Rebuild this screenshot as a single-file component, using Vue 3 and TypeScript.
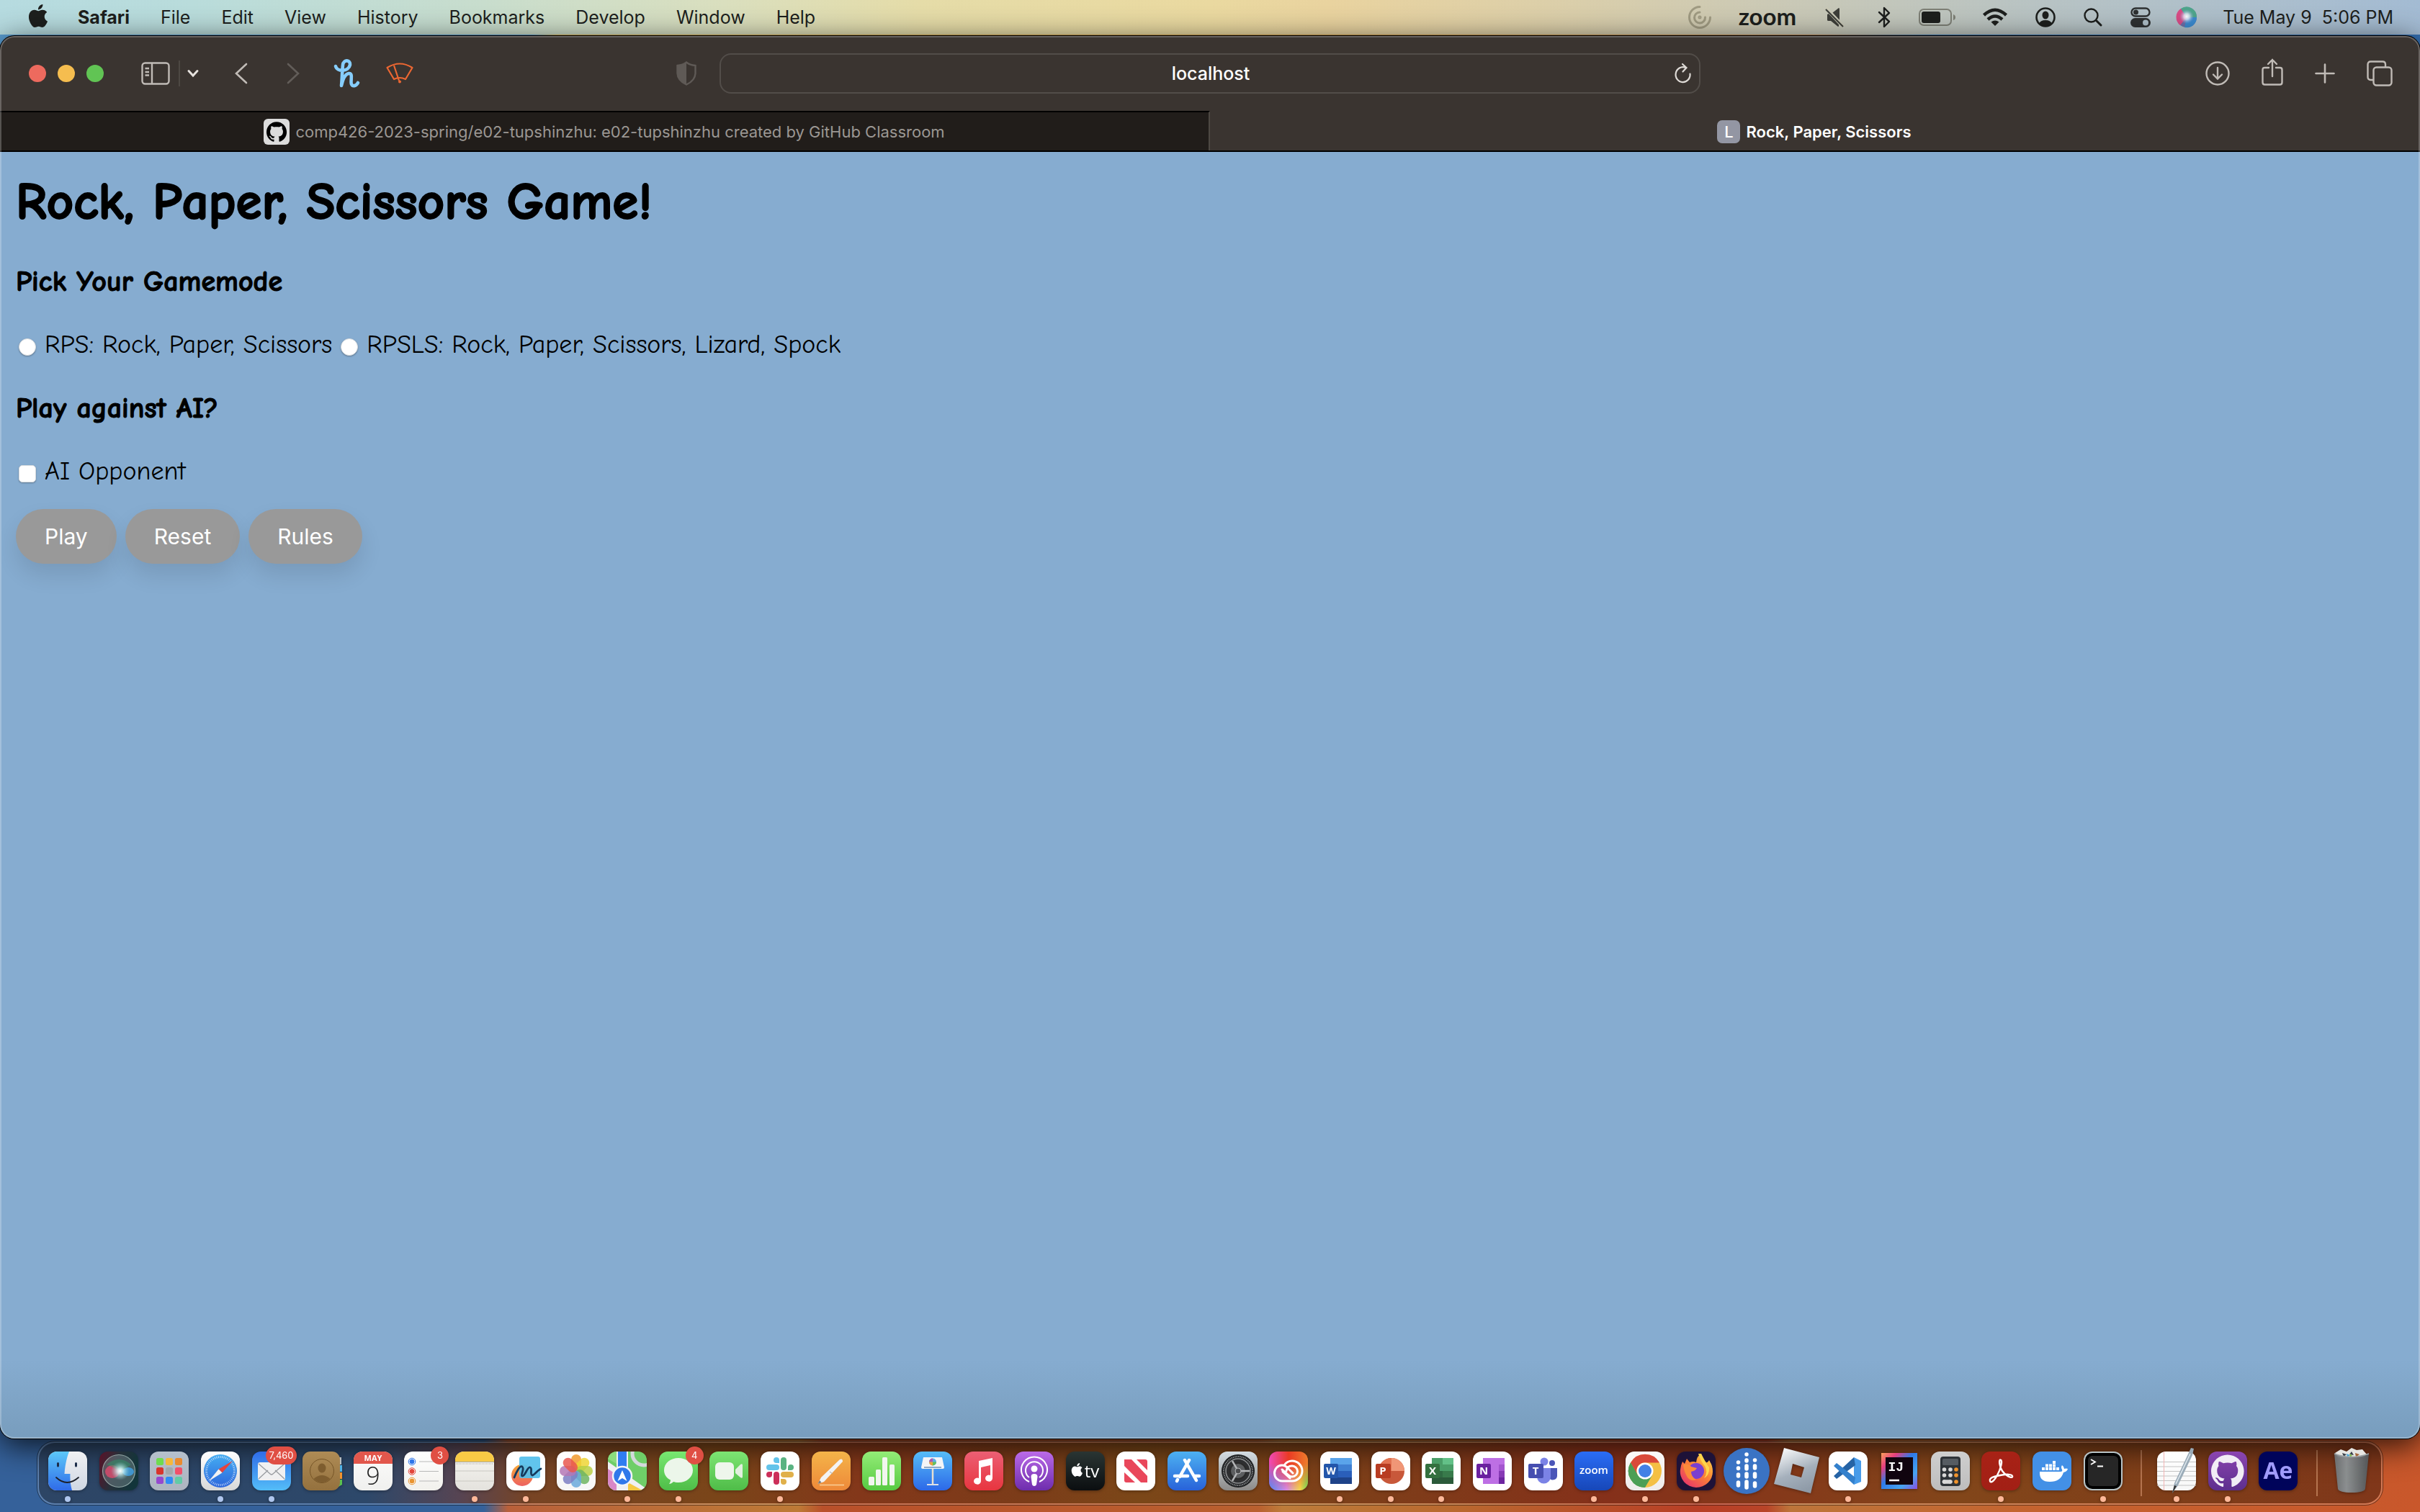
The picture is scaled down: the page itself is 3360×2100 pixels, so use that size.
<script setup lang="ts">
import { ref } from 'vue'

interface DockApp {
  name: string
  art: string
  running?: boolean
  badge?: string
}

const APPLE =
  'M12.152 6.896c-.948 0-2.415-1.078-3.96-1.04-2.04.027-3.91 1.183-4.961 3.014-2.117 3.675-.546 9.103 1.519 12.09 1.013 1.454 2.208 3.09 3.792 3.039 1.52-.065 2.09-.987 3.935-.987 1.831 0 2.35.987 3.96.948 1.637-.026 2.676-1.48 3.676-2.948 1.156-1.688 1.636-3.325 1.662-3.415-.039-.013-3.182-1.221-3.22-4.857-.026-3.04 2.48-4.494 2.597-4.559-1.429-2.09-3.623-2.324-4.39-2.376-2-.156-3.675 1.09-4.61 1.09zM15.53 3.83c.843-1.012 1.4-2.427 1.245-3.83-1.207.052-2.662.805-3.532 1.818-.78.896-1.454 2.338-1.273 3.714 1.338.104 2.715-.688 3.559-1.701'
const OCTOCAT =
  'M12 .297c-6.63 0-12 5.373-12 12 0 5.303 3.438 9.8 8.205 11.385.6.113.82-.258.82-.577 0-.285-.01-1.04-.015-2.04-3.338.724-4.042-1.61-4.042-1.61C4.422 18.07 3.633 17.7 3.633 17.7c-1.087-.744.084-.729.084-.729 1.205.084 1.838 1.236 1.838 1.236 1.07 1.835 2.809 1.305 3.495.998.108-.776.417-1.305.76-1.605-2.665-.3-5.466-1.332-5.466-5.93 0-1.31.465-2.38 1.235-3.22-.135-.303-.54-1.523.105-3.176 0 0 1.005-.322 3.3 1.23.96-.267 1.98-.399 3-.405 1.02.006 2.04.138 3 .405 2.28-1.552 3.285-1.23 3.285-1.23.645 1.653.24 2.873.12 3.176.765.84 1.23 1.91 1.23 3.22 0 4.61-2.805 5.625-5.475 5.92.42.36.81 1.096.81 2.22 0 1.606-.015 2.896-.015 3.286 0 .315.21.69.825.57C20.565 22.092 24 17.592 24 12.297c0-6.627-5.373-12-12-12'

/** Rounded app tile filled with a vertical gradient; the id also names a clip for its contents. */
function tile(id: string, top: string, bottom: string = top): string {
  return (
    `<defs><linearGradient id="${id}" x2="0" y2="1"><stop stop-color="${top}"/><stop offset="1" stop-color="${bottom}"/></linearGradient>` +
    `<clipPath id="${id}-clip"><rect width="54" height="54" rx="12"/></clipPath></defs>` +
    `<rect width="54" height="54" rx="12" fill="url(#${id})"/>`
  )
}

function glyph(text: string, x: number, y: number, size: number, fill = '#fff', weight = 700): string {
  return `<text x="${x}" y="${y}" font-size="${size}" font-weight="${weight}" fill="${fill}" text-anchor="middle" font-family="Open Sans, sans-serif">${text}</text>`
}

const around = (count: number, draw: (angle: number, i: number) => string): string =>
  Array.from({ length: count }, (_, i) => draw((360 / count) * i, i)).join('')

const launchpadColors = ['#6fdc4f', '#f5b83c', '#ea8a2f', '#d8352c', '#a3a8ab', '#f0506a', '#9548cf', '#2f8cf5', '#62cba6']
const petals = ['#f29a2e', '#efd535', '#b9cf45', '#6fb562', '#6aa9dc', '#7d7fc4', '#b477b5', '#e9574f']

const dockApps: DockApp[] = [
  {
    name: 'Finder',
    running: true,
    art:
      tile('finder', '#f1f1f3', '#cfd7e3') +
      `<defs><linearGradient id="finder-l" x2="0" y2="1"><stop stop-color="#5cc8f9"/><stop offset="1" stop-color="#2f6be9"/></linearGradient></defs>
      <path clip-path="url(#finder-clip)" fill="url(#finder-l)" d="M0 0H29C25 10 23 22 22.500 31H30.500C30 39 31 47 33 54H0Z"/>
      <path stroke="#1c2c48" stroke-width="3" stroke-linecap="round" fill="none" d="M13.500 16.500V20M38.500 16.500V20"/><path d="M11 36Q26 50 42 36" stroke="#1c1f28" stroke-width="1.800" fill="none" stroke-linecap="round"/>`,
  },
  {
    name: 'Siri',
    art:
      `<defs><linearGradient id="siri" x2="1" y2=".3"><stop stop-color="#5b1228"/><stop offset=".5" stop-color="#26303a"/><stop offset="1" stop-color="#12353a"/></linearGradient>
      <radialGradient id="siri-glow"><stop stop-color="#fff"/><stop offset=".3" stop-color="#dff" stop-opacity=".8"/><stop offset="1" stop-color="#8cc" stop-opacity="0"/></radialGradient></defs>
      <rect width="54" height="54" rx="12" fill="url(#siri)"/><circle cx="27" cy="27" r="22.500" fill="#7a8f92" fill-opacity=".45" stroke="#b7cfc9" stroke-opacity=".7" stroke-width="1.200"/>
      <ellipse cx="18" cy="28" rx="10" ry="9" fill="#e8486e" fill-opacity=".75"/><ellipse cx="40" cy="28" rx="8" ry="6" fill="#3f9fe0" fill-opacity=".85"/>
      <path d="M10 18Q27 4 44 18Q34 26 28 27Q20 22 10 18Z" fill="#2c9c68" fill-opacity=".45"/><circle cx="29" cy="27" r="13" fill="url(#siri-glow)"/>`,
  },
  {
    name: 'Launchpad',
    art:
      tile('launchpad', '#b5c0cc', '#adb4c0') +
      launchpadColors
        .map((c, i) => `<rect x="${9 + (i % 3) * 13}" y="${9 + Math.floor(i / 3) * 13}" width="10" height="10" rx="2.500" fill="${c}"/>`)
        .join(''),
  },
  {
    name: 'Safari',
    running: true,
    art:
      tile('safari', '#ffffff', '#d8d8d8') +
      `<defs><linearGradient id="safari-d" x2="0" y2="1"><stop stop-color="#45adf2"/><stop offset="1" stop-color="#2c66dc"/></linearGradient></defs><circle cx="27" cy="27" r="23" fill="url(#safari-d)"/>` +
      around(48, (a) => `<path d="M27 6V9" stroke="#fff" stroke-opacity=".8" stroke-width=".8" transform="rotate(${a} 27 27)"/>`) +
      `<path d="M44 13L24.500 24.500L29.500 29.500Z" fill="#e8433c"/><path d="M11 41L24.500 24.500L29.500 29.500Z" fill="#f2f2f2"/>`,
  },
  {
    name: 'Mail',
    running: true,
    badge: '7,460',
    art:
      tile('mail', '#2f6ce8', '#54bdf8') +
      `<rect x="8" y="15" width="38" height="25" rx="3" fill="#f0f0f1"/><path d="M9 38L22 26M45 38L32 26M9 17L25 31Q27 33 29 31L45 17" fill="none" stroke="#999ca1" stroke-width="1.300"/>`,
  },
  {
    name: 'Contacts',
    art:
      `<path d="M48 8H54V18H48Z" fill="#b9bfc2"/><path d="M48 19H55V28H48Z" fill="#4fb1e6"/><path d="M48 29H55V38H48Z" fill="#f0932f"/><path d="M48 39H55V46L48 50Z" fill="#59c24e"/>
      <defs><linearGradient id="contacts" x2="0" y2="1"><stop stop-color="#ae8b55"/><stop offset="1" stop-color="#94713e"/></linearGradient></defs><rect width="52" height="54" rx="11" fill="url(#contacts)"/>
      <circle cx="27" cy="27" r="16.500" fill="none" stroke="#765628" stroke-width="1"/><ellipse cx="27" cy="23" rx="5.500" ry="6.500" fill="#7e5d2f"/><path d="M15.500 38Q27 28 38.500 38Q27 48 15.500 38Z" fill="#7e5d2f"/>`,
  },
  {
    name: 'Calendar',
    art:
      tile('calendar', '#fcfcfc', '#f0f0ee') +
      `<path clip-path="url(#calendar-clip)" d="M0 0H54V17H0Z" fill="#e2574c"/>` +
      glyph('MAY', 27, 13, 11) +
      glyph('9', 27, 46, 34, '#222', 300),
  },
  {
    name: 'Reminders',
    badge: '3',
    art:
      tile('reminders', '#ffffff', '#f1f0ec') +
      ['#2f76ea', '#e2463b', '#e99430']
        .map((c, i) => `<circle cx="11" cy="${14 + i * 13.5}" r="4" fill="${c}" stroke="#fff" stroke-width="1"/><circle cx="11" cy="${14 + i * 13.5}" r="4.800" fill="none" stroke="${c}" stroke-width="1"/><path d="M21 ${14 + i * 13.5}H48" stroke="#b8b8b8"/>`)
        .join(''),
  },
  {
    name: 'Notes',
    running: true,
    art:
      tile('notes', '#f7f6f2', '#e4e2dd') +
      `<path clip-path="url(#notes-clip)" d="M0 0H54V14H0Z" fill="#f9ca45"/><path d="M0 14.500H54" stroke="#aaa7a0"/><path d="M1 17H53" stroke="#aaa7a0" stroke-dasharray="1 1"/><path d="M0 27H54M0 41H54" stroke="#cac8c2"/>`,
  },
  {
    name: 'Freeform',
    running: true,
    art:
      tile('freeform', '#ffffff') +
      `<defs><linearGradient id="freeform-o" x2="0" y2="1"><stop stop-color="#f6a734"/><stop offset="1" stop-color="#ed6161"/></linearGradient></defs>
      <circle cx="22" cy="33" r="15" fill="url(#freeform-o)"/><rect x="18" y="7" width="29" height="30" rx="3" fill="#55bfec" fill-opacity=".93"/>
      <path d="M11 36C14 28 19 19 22 21C26 24 19 33 22 34C26 35 29 21 33 22C37 23 32 32 36 33C39 33 43 26 48 24" stroke="#163a5c" stroke-width="2.800" fill="none" stroke-linecap="round"/>`,
  },
  {
    name: 'Photos',
    art:
      tile('photos', '#ffffff', '#f6f6f6') +
      around(8, (a, i) => `<rect x="20" y="4" width="14" height="23" rx="7" fill="${petals[i]}" fill-opacity=".85" transform="rotate(${a} 27 27)"/>`),
  },
  {
    name: 'Maps',
    running: true,
    art:
      tile('maps', '#6fce68') +
      `<g clip-path="url(#maps-clip)"><path d="M0 14L54 52V60H0Z" fill="#f0f0f2"/><path d="M28 43L48 54H28Z" fill="#f6c944"/><path d="M0 0H12V54H28V0" fill="#eef0f3"/><path d="M0 0H12V17L0 10Z" fill="#8bdc7e"/><path d="M14 0H26V28H14Z" fill="#2f7df1"/><path d="M0 24L12 32V54H0Z" fill="#d987c7"/><circle cx="50" cy="3" r="16" fill="none" stroke="#d4d8dc" stroke-width="5"/></g>
      <circle cx="20" cy="34" r="13" fill="#2f78ea" stroke="#f2f4f7" stroke-width="2.500"/><path d="M20 26L26.500 41L20 37L13.500 41Z" fill="#fff"/>`,
  },
  {
    name: 'Messages',
    running: true,
    badge: '4',
    art:
      tile('messages', '#78e771', '#4fbd48') +
      `<path d="M27 9C38.500 9 47 16.500 47 26S38.500 43 27 43C24 43 21.500 42.500 20 42C18 44 16 45 14 45C15.500 43 16 41 16 39.500C10.500 37 7 32 7 26C7 16.500 15.500 9 27 9Z" fill="#ecf6ea"/>`,
  },
  {
    name: 'FaceTime',
    art: tile('facetime', '#7de573', '#4fbc48') + `<rect x="8" y="15" width="26" height="24" rx="6" fill="#eef6ec"/><path d="M36 25L43 18Q46 16 46 19V35Q46 38 43 36L36 30Z" fill="#e2f0df"/>`,
  },
  {
    name: 'Slack',
    running: true,
    art:
      tile('slack', '#ffffff') +
      `<g stroke-width="8" stroke-linecap="round"><g stroke="#63c3ea" fill="#63c3ea"><path d="M12 22H22"/><path stroke="none" d="M26 16H22A4 4 0 1 1 26 12Z"/></g><g stroke="#5ab382" fill="#5ab382"><path d="M32 12V22"/><path stroke="none" d="M38 26V22A4 4 0 1 1 42 26Z"/></g><g stroke="#e0b04a" fill="#e0b04a"><path d="M32 32H42"/><path stroke="none" d="M28 38H32A4 4 0 1 1 28 42Z"/></g><g stroke="#cc2f59" fill="#cc2f59"><path d="M22 32V42"/><path stroke="none" d="M16 28V32A4 4 0 1 1 12 28Z"/></g></g>`,
  },
  {
    name: 'Pages',
    art: tile('pages', '#f4b449', '#ee8939') + `<path d="M11 46.500H45" stroke="#f9cf97" stroke-width="1.500"/><path d="M8.500 45L13 36L39 11Q43 9 43 14L17 42Z" fill="#f3f3f3"/><path d="M25 28L29 31" stroke="#a5a5a5"/><path d="M8.500 45L11 40L13.500 43Z" fill="#777"/>`,
  },
  {
    name: 'Numbers',
    art: tile('numbers', '#93ec77', '#57ca42') + `<g fill="#f2f6f0"><rect x="9" y="35" width="8" height="12" rx="1.500"/><rect x="19" y="25" width="7" height="22" rx="1.500"/><rect x="28" y="8" width="7" height="39" rx="1.500"/><rect x="38" y="18" width="7" height="29" rx="1.500"/></g>`,
  },
  {
    name: 'Keynote',
    art:
      tile('keynote', '#56bdf8', '#2c68e8') +
      `<path d="M14 8H40L43 22Q43 24 41 24H13Q11 24 11 22Z" fill="#f4f5f7"/><path d="M15 22H39" stroke="#6e8fb5" stroke-width="1.500"/><circle cx="27" cy="14.500" r="5" fill="#5aaee8"/><path d="M27 14.500V9.500A5 5 0 0 0 22 14.500Z" fill="#b05ab0"/><path d="M27 14.500V19.500A5 5 0 0 1 22 14.500Z" fill="#f0a23c"/><path d="M27 14.500H32A5 5 0 0 1 27 19.500Z" fill="#67bf5b"/><path d="M27 24V45" stroke="#e6dfd2" stroke-width="2.500"/><path d="M19 46H35" stroke="#dadfe8" stroke-width="2"/>`,
  },
  {
    name: 'Music',
    art: tile('music', '#ec5f74', '#e8353f') + `<path d="M20 13L39 9V37A5 4.500 0 1 1 36 33V19L23 22V41A5 4.500 0 1 1 20 37Z" fill="#fff"/>`,
  },
  {
    name: 'Podcasts',
    art:
      tile('podcasts', '#bb6ae8', '#6e2dad') +
      `<g fill="none" stroke="#fff" stroke-width="2"><path d="M20 42A18 18 0 1 1 34 42"/><path d="M20 36A12 12 0 1 1 34 36"/></g><circle cx="27" cy="24" r="4.500" fill="#fff"/><path d="M22.500 35Q22.500 31 27 31T31.500 35L30 46Q29 48 27 48T24 46Z" fill="#fff"/>`,
  },
  {
    name: 'TV',
    art: tile('tv', '#2a3533', '#0b0e10') + `<path transform="translate(6 16) scale(.78)" d="${APPLE}" fill="#fff"/>` + glyph('tv', 36, 36, 24, '#fff', 500),
  },
  {
    name: 'News',
    art: tile('news', '#ffffff') + `<path d="M11 11H21L43 34V43H34L11 20Z" fill="#e9475b"/><path d="M28 11H40Q43 11 43 14V26Z" fill="#e9475b"/><path d="M11 29V40Q11 43 14 43H26Z" fill="#e9475b"/>`,
  },
  {
    name: 'App Store',
    art: tile('appstore', '#4db1f2', '#2862d9') + `<g stroke="#fff" stroke-width="4.500" stroke-linecap="round"><path d="M30 12L17 35M24 12L40 40M10 34H28M37 34H44M14 39L13 41"/></g>`,
  },
  {
    name: 'System Settings',
    art:
      tile('settings', '#d4dde3', '#8c8b89') +
      `<circle cx="27" cy="27" r="23" fill="#1e2022"/><circle cx="27" cy="27" r="20" fill="none" stroke="#87898b" stroke-width="2" stroke-dasharray="1.400 1"/><circle cx="27" cy="27" r="17" fill="#2e2f31" stroke="#8c8e90" stroke-width="1.600"/><circle cx="27" cy="27" r="11" fill="#5c5e60" stroke="#2a2a2a" stroke-width="2"/>` +
      around(3, (a) => `<path d="M27 27H43" stroke="#b4b6b8" stroke-width="2.500" transform="rotate(${a} 27 27)"/>`) +
      `<circle cx="27" cy="27" r="4" fill="#4b4c4e" stroke="#b4b6b8"/>`,
  },
  {
    name: 'Creative Cloud',
    art:
      `<defs><linearGradient id="cc" x2="1" y2="0"><stop stop-color="#f04ab8"/><stop offset=".5" stop-color="#ea3a24"/><stop offset="1" stop-color="#ee7d2c"/></linearGradient>
      <linearGradient id="cc-low" x2="1" y2="0"><stop stop-color="#4a8df5"/><stop offset=".45" stop-color="#d68be8"/><stop offset=".8" stop-color="#f4d94a"/><stop offset="1" stop-color="#5be05c"/></linearGradient>
      <linearGradient id="cc-fade" x2="0" y2="1"><stop stop-color="#000"/><stop offset=".3" stop-color="#000"/><stop offset="1" stop-color="#fff"/></linearGradient><mask id="cc-mask"><rect width="54" height="54" fill="url(#cc-fade)"/></mask></defs>
      <rect width="54" height="54" rx="12" fill="url(#cc)"/><rect width="54" height="54" rx="12" fill="url(#cc-low)" mask="url(#cc-mask)"/>
      <path d="M18 41A10.500 11 0 0 1 18 19Q22 19 25 22L33 30M21 19Q25 13 32 13A14 14 0 0 1 32 41H18M29 37L19 28M24 27Q25 20 32 20A7.500 7.500 0 0 1 32 35Q29 35 26 32L18 25" fill="none" stroke="#fff" stroke-width="3" stroke-linecap="round"/>`,
  },
  {
    name: 'Word',
    running: true,
    art: tile('word', '#ffffff') + `<path d="M14 9H44V18H14Z" fill="#5aa4ea"/><path d="M14 18H44V27H14Z" fill="#3f80d2"/><path d="M14 27H44V36H14Z" fill="#2a5fba"/><path d="M14 36H44V45H14Z" fill="#1e4389"/><rect x="5" y="17" width="20" height="20" rx="2" fill="#2356aa"/>` + glyph('W', 15, 32, 14),
  },
  {
    name: 'PowerPoint',
    running: true,
    art: tile('powerpoint', '#ffffff') + `<circle cx="28" cy="27" r="18" fill="#c8583a"/><path d="M28 9A18 18 0 0 1 46 27H28Z" fill="#f09676"/><path d="M28 9A18 18 0 0 0 10 27H28Z" fill="#e27352"/><rect x="6" y="17" width="21" height="20" rx="2" fill="#b83c22"/>` + glyph('P', 16, 32, 15),
  },
  {
    name: 'Excel',
    running: true,
    art: tile('excel', '#ffffff') + `<path d="M14 9H29V27H14Z" fill="#4a9e68"/><path d="M29 9H44V18H29Z" fill="#63c188"/><path d="M29 18H44V27H29Z" fill="#4a9e68"/><path d="M14 27H29V36H14Z" fill="#2f6a42"/><path d="M29 27H44V36H29Z" fill="#387a4b"/><path d="M14 36H44V45H14Z" fill="#2b5a3a"/><rect x="5" y="17" width="20" height="20" rx="2" fill="#33703f"/>` + glyph('X', 15, 32, 15),
  },
  {
    name: 'OneNote',
    art: tile('onenote', '#ffffff') + `<path d="M14 9H44V45H14Z" fill="#bd6fe4"/><path d="M36 18H44V27H36Z" fill="#a455cf"/><path d="M36 27H44V36H36Z" fill="#873ab5"/><path d="M36 36H44V45H36Z" fill="#6d25a0"/><rect x="5" y="17" width="20" height="20" rx="2" fill="#6a209f"/>` + glyph('N', 15, 32, 15),
  },
  {
    name: 'Teams',
    art: tile('teams', '#ffffff') + `<circle cx="39" cy="16" r="4" fill="#4b56b8"/><path d="M35 23H46V34A6 6 0 0 1 36 38Z" fill="#4b56b8"/><circle cx="28" cy="14" r="5.500" fill="#7b83e6"/><path d="M18 23H37V35A9.500 9.500 0 0 1 18 35Z" fill="#7b83e6"/><rect x="6" y="17" width="21" height="20" rx="2" fill="#464eb0"/>` + glyph('T', 16, 32, 15),
  },
  { name: 'Zoom', running: true, art: tile('zoom', '#2a6df6', '#1747b8') + glyph('zoom', 27, 31, 15, '#fff', 600) },
  {
    name: 'Chrome',
    running: true,
    art:
      tile('chrome', '#fbfafa', '#efecea') +
      `<circle cx="27" cy="27" r="23" fill="#f4c044"/><path d="M27 27L17 33L7 15.500A23 23 0 0 0 27 50L37 33Z" fill="#4c9f55"/><path d="M7 15.500A23 23 0 0 1 47 15.500H27A11.500 11.500 0 0 0 17 33Z" fill="#d9493a"/><path d="M7 15.500L17 33L27 50A23 23 0 0 1 7 15.500Z" fill="#4c9f55"/><circle cx="27" cy="27" r="11.500" fill="#fff"/><circle cx="27" cy="27" r="9" fill="#4281e6"/>`,
  },
  {
    name: 'Firefox',
    running: true,
    art:
      tile('firefox', '#1e1238') +
      `<defs><linearGradient id="fox" x1="1" x2=".2" y2="1"><stop stop-color="#ffe24a"/><stop offset=".5" stop-color="#fb8334"/><stop offset="1" stop-color="#e8336c"/></linearGradient></defs>
      <path d="M27 50A23 22 0 0 1 5 25Q6 18 8 14L11 17L14 10L18 15Q23 13 27 15Q28 6 34 3Q35 11 41 15Q43 16 45 12Q50 19 50 28A23 22 0 0 1 27 50Z" fill="url(#fox)"/><circle cx="27" cy="27" r="11" fill="#7a3fd0"/><path d="M9 18Q17 16 20 21L28 23Q26 27 20 28Q20 35 27 39Q20 42 15 36Q10 28 9 18Z" fill="#fb8a3a"/><path d="M30 3Q34 15 39 20Q44 29 38 37Q46 32 45 22Q41 17 34 3Z" fill="#ffd54a"/>`,
  },
  {
    name: 'Panopto',
    art: `<circle cx="27" cy="27" r="32" fill="#3a73c4"/><g stroke="#fff" stroke-width="5.500" stroke-linecap="round"><path d="M27 4V4.100M27 12V13M27 20V24M27 31V35M27 42V50"/><path d="M15.500 15V15.100M15.500 23V23.500M15.500 32V34M15.500 43V47"/><path d="M38.500 12V12.100M38.500 20V23M38.500 31V35M38.500 44V48"/></g>`,
  },
  {
    name: 'Roblox',
    art: `<defs><linearGradient id="roblox" x1=".1" x2=".5" y2="1"><stop stop-color="#fff"/><stop offset=".6" stop-color="#a5b0bc"/><stop offset="1" stop-color="#8f9ba8"/></linearGradient></defs><path fill-rule="evenodd" fill="url(#roblox)" d="M8 -5L57 8L45 58L-6 45ZM20 17L17 32L32 36L36 22Z"/>`,
  },
  {
    name: 'Visual Studio Code',
    running: true,
    art: tile('vscode', '#ffffff') + `<path d="M35 8L45 13V42L35 46Z" fill="#479be9"/><path d="M35 8L7 34L11 38L37 19Z" fill="#2563a5"/><path d="M35 46L7 20L11 16L37 36Z" fill="#3380cc"/>`,
  },
  {
    name: 'IntelliJ IDEA',
    art: `<defs><linearGradient id="ij" x2="1" y2="1"><stop stop-color="#fba05a"/><stop offset=".22" stop-color="#e83f7f"/><stop offset=".45" stop-color="#2e7ae8"/><stop offset=".75" stop-color="#47a4f0"/><stop offset="1" stop-color="#8b4fe0"/></linearGradient></defs><rect x="2" y="2" width="50" height="50" fill="url(#ij)"/><rect x="8" y="8" width="38" height="38" fill="#10040f"/><text x="11.500" y="27" font-family="Liberation Mono, monospace" font-size="18" font-weight="700" fill="#fff">IJ</text><path d="M13 40H27" stroke="#fff" stroke-width="2.500"/>`,
  },
  {
    name: 'Calculator',
    art:
      tile('calculator', '#cfcfcf', '#bdbdbd') +
      `<rect x="13" y="7" width="28" height="41" rx="4" fill="#2e3338"/><rect x="16" y="10" width="22" height="9" rx="1.500" fill="#565c62"/>` +
      [25, 33, 42].map((y) => `<circle cx="18.500" cy="${y}" r="2.800" fill="#d8d8d8"/><circle cx="27" cy="${y}" r="2.800" fill="#d8d8d8"/><circle cx="35" cy="${y}" r="2.800" fill="#f1942c"/>`).join('') +
      `<path d="M18.500 42H26" stroke="#d8d8d8" stroke-width="5.600" stroke-linecap="round"/>`,
  },
  {
    name: 'Acrobat Reader',
    running: true,
    art: tile('acrobat', '#a82216', '#a21f15') + `<path d="M12 41C10 36 20 34 29 32.500C37 31 44 32 43 35C42 38 33 33 29 27C25 21 24 11 26.500 11.500C30 12 27 24 22 33C17 42 13 44 12 41Z" fill="none" stroke="#fff" stroke-width="2.400"/>`,
  },
  {
    name: 'Docker',
    art: tile('docker', '#4390e6') + `<path d="M10 28H39Q42 28 41 25Q39 22 41 19Q44 21 44 24Q47 23 49 24Q48 28 43 29Q39 42 24 42Q9 42 10 28Z" fill="#fff"/><path d="M13 22H17V26H13ZM18 22H22V26H18ZM23 22H27V26H23ZM28 22H32V26H28ZM33 22H37V26H33ZM18 17.500H22V21.500H18ZM23 17.500H27V21.500H23ZM28 17.500H32V21.500H28ZM28 13H32V17H28Z" fill="#fff"/>`,
  },
  {
    name: 'Terminal',
    running: true,
    art: `<rect width="54" height="54" rx="12" fill="#b9c4c6"/><rect x="2" y="2" width="50" height="50" rx="10" fill="#000"/><rect x="6" y="6" width="42" height="42" rx="6" fill="#262626"/><path d="M10 11L16 14.500L10 18M19 20.500H27" fill="none" stroke="#fff" stroke-width="1.800"/>`,
  },
]

const recentApps: DockApp[] = [
  {
    name: 'TextEdit',
    running: true,
    art:
      tile('textedit', '#ffffff', '#f7f7f7') +
      `<path d="M0 14.500H54M0 21H54M0 27.500H54M0 34H54M0 40.500H54M0 47H54" stroke="#c3c3c3"/><path d="M9.500 0V54" stroke="#f2b5b5"/><path d="M47 -5L51 -4L49 5L29 47L21 58L24 44Z" fill="#9aabb8"/><path d="M46 3L26 45" stroke="#dfe8ee" stroke-width="1.500"/><path d="M24 47L27 48L21 58Z" fill="#333"/>`,
  },
  {
    name: 'GitHub Desktop',
    running: true,
    art: tile('ghdesktop', '#8b45b0', '#5d2f8e') + `<path transform="translate(4 4) scale(1.900)" d="${OCTOCAT}" fill="#f1edf5"/>`,
  },
  { name: 'After Effects', art: tile('aftereffects', '#00045a') + glyph('Ae', 27, 38, 32, '#a09bfb') },
]

const trash: DockApp = {
  name: 'Trash',
  art: `<defs><linearGradient id="bin" x2="1" y2="0"><stop stop-color="#6d7275"/><stop offset=".35" stop-color="#8e9497"/><stop offset="1" stop-color="#54595c"/></linearGradient></defs>
    <path d="M4 2L12 -3L20 0L27 -5L34 -2L42 -3L48 4L44 8H8Z" fill="#e6e6e2"/><path d="M14 2L20 4L16 7ZM27 0L30 5L24 4Z" fill="#39404a"/><path d="M20 3L25 5L21 8Z" fill="#4aa6d8"/><path d="M32 2L38 4L33 8Z" fill="#a5673c"/><path d="M25 3L28 6L24 8Z" fill="#7cbf4c"/>
    <path d="M3 3Q27 12 51 3L46 52Q44 57 27 57T8 52Z" fill="url(#bin)" fill-opacity=".95"/><path d="M3 3Q27 12 51 3" fill="none" stroke="#9ba1a4" stroke-width="1.500"/>`,
}

const dockGroups: DockApp[][] = [dockApps, recentApps, [trash]]
const menus = ['File', 'Edit', 'View', 'History', 'Bookmarks', 'Develop', 'Window', 'Help']

const address = ref('localhost')
const mode = ref('')
const againstAi = ref(false)

function reset(): void {
  mode.value = ''
  againstAi.value = false
}
</script>

<template>
  <div class="desktop">
    <header class="menubar">
      <nav class="menus" aria-label="Menu bar">
        <button class="apple" aria-label="Apple menu">
          <svg width="32" height="32" viewBox="0 0 24 24"><path :d="APPLE" fill="#1d1f1d" /></svg>
        </button>
        <button class="menu current">Safari</button>
        <button v-for="menu in menus" :key="menu" class="menu">{{ menu }}</button>
      </nav>
      <div class="status">
        <svg class="swirl" width="32" height="32" viewBox="0 0 32 32" fill="none" stroke="#a09b82" stroke-width="3" stroke-linecap="round">
          <path d="M16 1.500A14.500 14.500 0 1 0 30.500 16M16 9A7.500 7.500 0 1 0 23.500 16" /><circle cx="16" cy="16" r="1" />
        </svg>
        <span class="zoom-word">zoom</span>
        <svg class="mute" width="26" height="28" viewBox="0 0 26 28" fill="#3d3e39">
          <path d="M3 10V18Q3 19 5 19H8L18 27Q19 27 19 26V22L5 9ZM10 8L19 1Q20 1 20 3V18Z" /><path d="M1 1L25 27" stroke="#c9c8b6" stroke-width="5" /><path d="M1 3L25 27" stroke="#3d3e39" stroke-width="2" />
        </svg>
        <svg class="bt" width="18" height="30" viewBox="0 0 18 30" fill="none" stroke="#1d1f1d" stroke-width="2.400" stroke-linejoin="round" stroke-linecap="round">
          <path d="M2 8L16 21L9 28V2L16 9L2 22" />
        </svg>
        <svg class="battery" width="52" height="24" viewBox="0 0 52 24">
          <rect x="1" y="1" width="44" height="22" rx="6" fill="none" stroke="#7d7f75" stroke-width="2" /><rect x="4" y="4" width="26" height="16" rx="3" fill="#1d1f1d" /><path d="M48 8Q51 9 51 12T48 16Z" fill="#7d7f75" />
        </svg>
        <svg class="wifi" width="34" height="26" viewBox="0 0 34 26" fill="none" stroke="#1d1f1d" stroke-width="4.500">
          <path d="M1.500 10Q17 -4.500 32.500 10M7 16Q17 7 27 16" /><path d="M17 25L11.500 19.500Q17 15.500 22.500 19.500Z" fill="#1d1f1d" stroke="none" />
        </svg>
        <svg class="user" width="28" height="28" viewBox="0 0 28 28">
          <circle cx="14" cy="14" r="12.500" fill="none" stroke="#1d1f1d" stroke-width="2.600" /><ellipse cx="14" cy="11" rx="4.500" ry="5.500" fill="#1d1f1d" /><path d="M5 23Q7 18 14 18T23 23Q14 30 5 23Z" fill="#1d1f1d" />
        </svg>
        <svg class="search" width="26" height="26" viewBox="0 0 26 26" fill="none" stroke="#1d1f1d" stroke-linecap="round">
          <circle cx="10.500" cy="10.500" r="9" stroke-width="2.400" /><path d="M17.500 17.500L24 24" stroke-width="3" />
        </svg>
        <svg class="control" width="28" height="28" viewBox="0 0 28 28">
          <rect x="1.500" y="1.500" width="25" height="11" rx="5.500" fill="none" stroke="#2e3132" stroke-width="2.400" /><circle cx="7.500" cy="7" r="3.500" fill="#2e3132" /><rect y="15" width="28" height="13" rx="6.500" fill="#2e3132" /><circle cx="21" cy="21.500" r="4" fill="#aebfc8" />
        </svg>
        <svg class="siri" width="28" height="28" viewBox="0 0 28 28">
          <defs>
            <radialGradient id="menu-siri"><stop stop-color="#ffffff" /><stop offset=".4" stop-color="#e8ecfb" stop-opacity=".8" /><stop offset="1" stop-color="#8fa3d8" stop-opacity="0" /></radialGradient>
          </defs>
          <circle cx="14" cy="14" r="14" fill="#6d6fa8" /><path d="M14 14L6 2A14 14 0 0 0 5 25Z" fill="#d94c86" /><path d="M14 14L6 2A14 14 0 0 1 28 14Z" fill="#4ea58c" /><path d="M14 14L28 14A14 14 0 0 1 11 28Z" fill="#3c8bd0" /><circle cx="14" cy="13" r="10" fill="url(#menu-siri)" />
        </svg>
        <time class="clock">Tue May 9&nbsp; 5:06 PM</time>
      </div>
    </header>

    <main class="window">
      <div class="toolbar">
        <div class="tools-left">
          <div class="lights">
            <button class="light close" aria-label="Close"></button>
            <button class="light minimize" aria-label="Minimize"></button>
            <button class="light full" aria-label="Full screen"></button>
          </div>
          <button class="sidebar" aria-label="Sidebar">
            <svg width="40" height="32" viewBox="0 0 40 32" fill="none" stroke="#c0bbb6" stroke-width="2.400">
              <rect x="1.500" y="1.500" width="37" height="29" rx="4" /><path d="M15 2V30M5.500 9H11M5.500 14H11M5.500 18.500H11" />
            </svg>
          </button>
          <span class="divider"></span>
          <button class="more" aria-label="Tab groups">
            <svg width="16" height="12" viewBox="0 0 16 12" fill="none" stroke="#e6e2de" stroke-width="3" stroke-linecap="round"><path d="M2 2.500L8 9L14 2.500" /></svg>
          </button>
          <button class="back" aria-label="Back">
            <svg width="18" height="30" viewBox="0 0 18 30" fill="none" stroke="#c0bbb6" stroke-width="2.600" stroke-linecap="round"><path d="M16 2L2 15L16 28" /></svg>
          </button>
          <button class="forward" aria-label="Forward">
            <svg width="18" height="30" viewBox="0 0 18 30" fill="none" stroke="#625d59" stroke-width="2.600" stroke-linecap="round"><path d="M2 2L16 15L2 28" /></svg>
          </button>
          <button class="honey" aria-label="Honey">
            <svg width="36" height="40" viewBox="0 0 36 40" fill="none" stroke="#86cdfb" stroke-width="5" stroke-linecap="round" stroke-linejoin="round">
              <path d="M2 10C4 18 20 18 22 8C23 1 13 0 12 8C11 18 11 28 10 37C12 28 15 21 20 20C27 19 22 31 24 35C26 39 31 37 33 33" stroke-width="4.600" />
            </svg>
          </button>
          <button class="wiper" aria-label="Wipr">
            <svg width="38" height="30" viewBox="0 0 38 30" fill="none" stroke="#ec6732" stroke-width="2.200" stroke-linejoin="round">
              <path d="M1.500 7Q19 -4 36.500 7L27 23Q19 19 11 23ZM11 4L18 25" /><circle cx="19" cy="26.500" r="2" fill="#ec6732" stroke="none" />
            </svg>
          </button>
          <button class="shield" aria-label="Privacy report">
            <svg width="28" height="34" viewBox="0 0 28 34"><path d="M14 1.500Q19 5.500 26.500 6V17Q26 27 14 32.500Q2 27 1.500 17V6Q9 5.500 14 1.500Z" fill="none" stroke="#5f5a56" stroke-width="2.400" /><path d="M14 1V33Q1 27 1 17V6Q9 5.500 14 1Z" fill="#5f5a56" /></svg>
          </button>
        </div>
        <div class="address">
          <input v-model="address" type="text" aria-label="Address" />
          <button class="reload" aria-label="Reload">
            <svg width="24" height="28" viewBox="0 0 24 28" fill="none" stroke="#dedad6" stroke-width="2.200" stroke-linecap="round"><path d="M21.500 14.500A10 10.500 0 1 1 15 5.800M11 1L16.500 6L11.500 11.500" /></svg>
          </button>
        </div>
        <div class="tools-right">
          <button aria-label="Downloads">
            <svg width="34" height="34" viewBox="0 0 34 34" fill="none" stroke="#c0bbb6" stroke-width="2.400" stroke-linecap="round"><circle cx="17" cy="17" r="15.500" /><path d="M17 9V24M11 18.500L17 24.500L23 18.500" /></svg>
          </button>
          <button class="share" aria-label="Share">
            <svg width="30" height="38" viewBox="0 0 30 38" fill="none" stroke="#c0bbb6" stroke-width="2.400" stroke-linecap="round"><path d="M10 13H4.500Q1.500 13 1.500 16V33.500Q1.500 36.500 4.500 36.500H25.500Q28.500 36.500 28.500 33.500V16Q28.500 13 25.500 13H20M15 25V2M9 8L15 2L21 8" /></svg>
          </button>
          <button aria-label="New tab">
            <svg width="28" height="28" viewBox="0 0 28 28" stroke="#c0bbb6" stroke-width="2.600" stroke-linecap="round"><path d="M14 1.500V26.500M1.500 14H26.500" /></svg>
          </button>
          <button aria-label="Tab overview">
            <svg width="36" height="36" viewBox="0 0 36 36" fill="none" stroke="#c0bbb6" stroke-width="2.400"><rect x="9.500" y="9.500" width="25" height="25" rx="4" /><path d="M9 27H5.500Q1.500 27 1.500 23V5.500Q1.500 1.500 5.500 1.500H22Q26 1.500 26 5.500V9" /></svg>
          </button>
        </div>
      </div>

      <div class="tabs" role="tablist">
        <button class="tab" role="tab" aria-selected="false">
          <svg width="36" height="36" viewBox="0 0 36 36"><rect width="36" height="36" rx="6" fill="#dcdcdc" /><path transform="translate(4 4) scale(1.170)" :d="OCTOCAT" fill="#000" /></svg>
          <span>comp426-2023-spring/e02-tupshinzhu: e02-tupshinzhu created by GitHub Classroom</span>
        </button>
        <button class="tab active" role="tab" aria-selected="true">
          <span class="letter">L</span>
          <span>Rock, Paper, Scissors</span>
        </button>
      </div>

      <section class="page">
        <h1>Rock, Paper, Scissors Game!</h1>
        <h3>Pick Your Gamemode</h3>
        <div class="options">
          <label><input v-model="mode" type="radio" name="mode" value="rps" />RPS: Rock, Paper, Scissors</label>
          <label><input v-model="mode" type="radio" name="mode" value="rpsls" />RPSLS: Rock, Paper, Scissors, Lizard, Spock</label>
        </div>
        <h3>Play against AI?</h3>
        <div class="options">
          <label><input v-model="againstAi" type="checkbox" />AI Opponent</label>
        </div>
        <div class="actions">
          <button type="button">Play</button>
          <button type="button" @click="reset">Reset</button>
          <button type="button">Rules</button>
        </div>
      </section>
    </main>

    <footer class="dock">
      <template v-for="(group, g) in dockGroups" :key="g">
        <span v-if="g" class="dock-divider"></span>
        <button v-for="app in group" :key="app.name" class="app" :class="{ running: app.running }" :aria-label="app.name">
          <svg width="54" height="54" viewBox="0 0 54 54" v-html="app.art"></svg>
          <span v-if="app.badge" class="badge">{{ app.badge }}</span>
        </button>
      </template>
    </footer>
  </div>
</template>

<style>
body {
  overflow: hidden;
}
</style>

<style scoped>
.desktop {
  display: flex;
  flex-direction: column;
  min-height: 100vh;
  font-family: Inter, sans-serif;
  background:
    linear-gradient(90deg, #5b9fd4 22%, #dcb552 23%, #cf9a46 60%, #c08a55 75%, #3f7fbd 80%, #3570b3) top / 100% 120px no-repeat,
    linear-gradient(90deg, #35619a 20%, #b9603a 21%, #bd7a36 33%, #b9502a 34%, #b9602f 52%, #bd7c3a 53%, #b9692f 60%, #b83f26 70%, #b84428 73%, #bd753a 74%, #c4632f 84%, #c9572b);
}
button {
  display: flex;
  align-items: center;
  margin: 0;
  padding: 0;
  border: 0;
  background: none;
  color: inherit;
  font: inherit;
}
svg {
  display: block;
  flex: none;
  overflow: visible;
}

.menubar {
  display: flex;
  justify-content: space-between;
  height: 48px;
  padding: 0 37px;
  color: #1d1f1d;
  font-size: 25px;
  background: linear-gradient(90deg, #b6dbe0 0%, #b9dcdb 8%, #c8ddcd 20%, #dadfbe 30%, #e5dca8 38%, #ead9a0 50%, #e9d39f 55%, #dccfa9 64%, #cbc9b5 73%, #b8c3c3 84%, #a3bbd3 100%);
}
.menus,
.status {
  display: flex;
  align-items: center;
}
.menus {
  gap: 43px;
}
.current {
  font-weight: 700;
}
.apple {
  margin-right: -4px;
  margin-bottom: 4px;
}
.zoom-word {
  margin: 0 40px 4px 38px;
  font: 700 33px/44px Lato, sans-serif;
}
.bt {
  margin-left: 47px;
}
.battery {
  margin-left: 39px;
}
.wifi {
  margin-left: 37px;
}
.user {
  margin-left: 39px;
}
.search {
  margin-left: 39px;
}
.control {
  margin-left: 39px;
}
.siri {
  margin: 0 36px;
}

.window {
  position: relative;
  display: flex;
  flex: 1;
  flex-direction: column;
  margin-top: 2px;
  overflow: hidden;
  border-radius: 20px;
  background: #3a3430;
  box-shadow: 0 0 0 1px #000, 0 10px 44px rgba(0, 0, 0, 0.8);
}
.window::after {
  position: absolute;
  inset: 0;
  border: 2px solid rgba(255, 255, 255, 0.24);
  border-radius: 20px;
  content: '';
  pointer-events: none;
}
.toolbar {
  display: grid;
  grid-template-columns: 999fr 1362fr 999fr;
  align-items: center;
  height: 104px;
}
.tools-left,
.tools-right {
  display: flex;
  align-items: center;
}
.tools-left {
  padding: 0 32px 0 40px;
}
.lights {
  display: flex;
  gap: 16px;
}
.light {
  width: 24px;
  height: 24px;
  border-radius: 50%;
}
.close {
  background: #ed6a5e;
}
.minimize {
  background: #f5bd4f;
}
.full {
  background: #61c454;
}
.sidebar {
  margin-left: 52px;
}
.divider {
  width: 2px;
  height: 36px;
  margin: 0 10px 0 12px;
  background: #4d4843;
}
.back {
  margin-left: 50px;
}
.forward {
  margin-left: 54px;
}
.honey {
  margin-left: 48px;
}
.wiper {
  margin-left: 36px;
}
.shield {
  margin-left: auto;
}
.address {
  display: flex;
  align-items: center;
  box-sizing: border-box;
  height: 56px;
  padding: 0 10px 0 12px;
  border: 2px solid #524d49;
  border-radius: 16px;
}
.address input {
  flex: 1;
  min-width: 0;
  margin: 0;
  padding: 0 0 0 24px;
  border: 0;
  outline: 0;
  background: none;
  color: #fff;
  font: 500 25px/48px Inter, sans-serif;
  text-align: center;
}
.tools-right {
  justify-content: flex-end;
  gap: 44px;
  padding-right: 38px;
}
.share {
  margin-bottom: 4px;
}

.tabs {
  display: grid;
  grid-template-columns: 1fr 1fr;
  height: 57px;
  box-sizing: border-box;
  border-bottom: 2px solid #000;
  font-size: 22px;
}
.tab {
  justify-content: center;
  gap: 8px;
  border-top: 2px solid #000;
  border-right: 2px solid #4d4843;
  background: #211d1a;
  color: #9b9793;
}
.tab.active {
  border-color: transparent;
  background: none;
  color: #fff;
  font-weight: 600;
}
.letter {
  width: 32px;
  border-radius: 7px;
  background: #9396a3;
  color: #fff;
  font-weight: 500;
  line-height: 32px;
}

.page {
  flex: 1;
  padding: 24px 22px;
  background: linear-gradient(to top, #789dbd, #86acd0 110px);
  color: #000;
  font-family: 'Comic Sans MS', 'Comic Neue', 'Open Sans', sans-serif;
}
h1,
h3 {
  margin: 0;
}
h1 {
  font-size: 73px;
  line-height: 90px;
  -webkit-text-stroke: 2px #000;
}
h3 {
  margin: 40px 0;
  font-size: 40px;
  line-height: 52px;
  -webkit-text-stroke: 1px #000;
}
.options {
  display: flex;
  gap: 8px;
  font-size: 36px;
  line-height: 44px;
}
.options label {
  display: flex;
  align-items: center;
}
.options input {
  appearance: none;
  width: 24px;
  height: 24px;
  margin: 6px 12px 0 4px;
  border: 1px solid #d5dade;
  border-radius: 50%;
  background: #fff;
  box-shadow: 0 1px 2px rgba(0, 0, 0, 0.3);
}
.options input[type='checkbox'] {
  border-radius: 5px;
}
.options input:checked {
  border: 7px solid #2f7bf0;
}
.actions {
  display: flex;
  gap: 12px;
  margin-top: 30px;
}
.actions button {
  height: 76px;
  padding: 0 40px;
  border-radius: 38px;
  background: #999;
  box-shadow: 0 16px 30px rgba(0, 0, 0, 0.1);
  color: #fff;
  font: 400 30px/36px Inter, sans-serif;
}

.dock {
  display: flex;
  justify-content: space-between;
  box-sizing: border-box;
  height: 88px;
  margin: 4px 52px 10px;
  padding: 12px 13px 0;
  border: 2px solid rgba(255, 255, 255, 0.2);
  border-radius: 24px;
  background: linear-gradient(90deg, #2d4565 0%, #2d486a 14%, #574452 18%, #784424 21%, #7a4519 29%, #83371a 35%, #7c3c19 42%, #7b4718 47%, #7d3f19 56%, #85301a 67%, #853a1a 75%, #82461a 82%, #7f3d19 92%, #80371a 100%) padding-box;
  box-shadow: 0 0 0 1px rgba(0, 0, 0, 0.45);
}
.app {
  position: relative;
  flex-direction: column;
  align-items: center;
  width: 54px;
  filter: drop-shadow(0 1px 2px rgba(0, 0, 0, 0.35));
}
.running::after {
  width: 8px;
  height: 8px;
  margin-top: 8px;
  border-radius: 50%;
  background: #ffb899;
  content: '';
}
.app:nth-child(-n + 8)::after {
  background: #afc6ee;
}
.badge {
  position: absolute;
  top: -7px;
  right: -8px;
  box-sizing: border-box;
  min-width: 25px;
  padding: 0 4px;
  border-radius: 13px;
  background: #e04f44;
  color: #fff;
  font-size: 13px;
  line-height: 25px;
  text-align: center;
}
.dock-divider {
  width: 2px;
  height: 64px;
  margin: -2px 4px 0 9px;
  background: #b5744f;
}
</style>
